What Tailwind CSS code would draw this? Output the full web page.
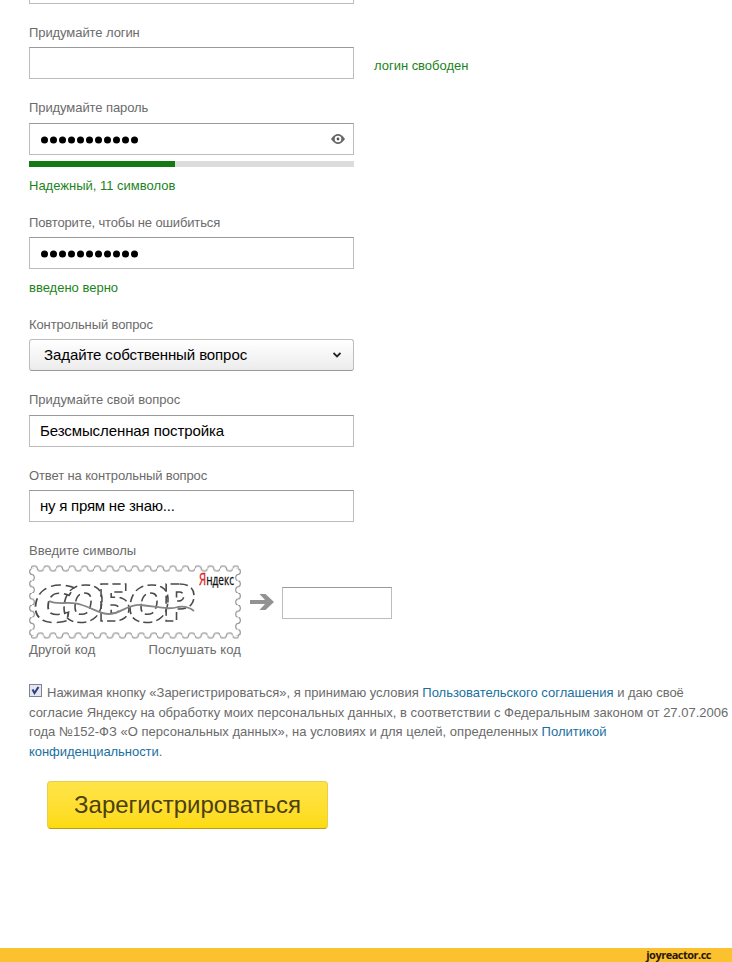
<!DOCTYPE html>
<html lang="ru">
<head>
<meta charset="utf-8">
<title>Регистрация</title>
<script src="https://cdn.jsdelivr.net/npm/@tailwindcss/browser@4"></script>
</head>
<body class="bg-white">
<div class="flex h-[962px] w-[732px] flex-col overflow-hidden bg-white font-['Liberation_Sans',Arial,sans-serif] text-[13px] leading-5 tracking-[-0.08px] text-[#6b6b6b]">
  <main class="flex flex-1 flex-col items-start pl-[29px]">
    <div class="h-1 w-[325px] border-x border-b border-[#bcbcbc]"></div>

    <label class="mt-[19px] whitespace-nowrap">Придумайте логин</label>
    <div class="mt-1 flex items-center">
      <div class="h-8 w-[325px] border border-[#bcbcbc] border-t-[#999]"></div>
      <span class="mt-[5px] ml-5 whitespace-nowrap tracking-[-0.02px] text-[#1c831c]">логин свободен</span>
    </div>

    <label class="mt-[19px] whitespace-nowrap">Придумайте пароль</label>
    <div class="mt-[5px] flex h-8 w-[325px] items-center justify-between border border-[#bcbcbc] border-t-[#999] pr-2 pl-[10px]">
      <svg class="mt-px h-2 w-[100px] fill-black" viewBox="0 0 100 8"><circle cx="4.500" cy="4" r="3.500"/><circle cx="13.500" cy="4" r="3.500"/><circle cx="22.500" cy="4" r="3.500"/><circle cx="31.500" cy="4" r="3.500"/><circle cx="40.500" cy="4" r="3.500"/><circle cx="49.500" cy="4" r="3.500"/><circle cx="58.500" cy="4" r="3.500"/><circle cx="67.500" cy="4" r="3.500"/><circle cx="76.500" cy="4" r="3.500"/><circle cx="85.500" cy="4" r="3.500"/><circle cx="94.500" cy="4" r="3.500"/></svg>
      <svg class="h-[10px] w-[14px]" viewBox="0 0 14 10"><path d="M0 5Q7-5 14 5Q7 15 0 5Z" fill="#666"/><circle cx="7" cy="5" r="3.300" fill="#fff"/><circle cx="7" cy="5" r="1.400" fill="#555"/></svg>
    </div>
    <div class="mt-1.5 h-1.5 w-[325px] bg-[#dcdcdc]"><div class="h-full w-[146px] bg-[#137a13]"></div></div>
    <div class="mt-[9px] whitespace-nowrap tracking-normal text-[#1c831c]">Надежный, 11 символов</div>

    <label class="mt-[17px] whitespace-nowrap tracking-[-0.14px]">Повторите, чтобы не ошибиться</label>
    <div class="mt-1 flex h-8 w-[325px] items-center border border-[#bcbcbc] border-t-[#999] pl-[10px]">
      <svg class="mt-px h-2 w-[100px] fill-black" viewBox="0 0 100 8"><circle cx="4.500" cy="4" r="3.500"/><circle cx="13.500" cy="4" r="3.500"/><circle cx="22.500" cy="4" r="3.500"/><circle cx="31.500" cy="4" r="3.500"/><circle cx="40.500" cy="4" r="3.500"/><circle cx="49.500" cy="4" r="3.500"/><circle cx="58.500" cy="4" r="3.500"/><circle cx="67.500" cy="4" r="3.500"/><circle cx="76.500" cy="4" r="3.500"/><circle cx="85.500" cy="4" r="3.500"/><circle cx="94.500" cy="4" r="3.500"/></svg>
    </div>
    <div class="mt-[9px] whitespace-nowrap tracking-normal text-[#1c831c]">введено верно</div>

    <label class="mt-[17px] whitespace-nowrap tracking-[-0.11px]">Контрольный вопрос</label>
    <div class="mt-1 flex h-8 w-[325px] items-center justify-between rounded-[3px] border border-[#bdbdbd] border-b-[#999] bg-linear-to-b from-white to-[#ececec] pr-3 pl-[14px] text-[15px] tracking-[-0.09px] text-black">
      <span class="whitespace-nowrap">Задайте собственный вопрос</span>
      <svg class="h-[6px] w-[8px]" viewBox="0 0 8 6" fill="none" stroke="#222" stroke-width="1.8"><path d="M.5 1L4 4.400L7.500 1"/></svg>
    </div>

    <label class="mt-[19px] whitespace-nowrap tracking-normal">Придумайте свой вопрос</label>
    <div class="mt-[5px] flex h-8 w-[325px] items-center border border-[#bcbcbc] border-t-[#999] pl-[10px] text-[15px] tracking-[-0.09px] whitespace-nowrap text-black">Безсмысленная постройка</div>

    <label class="mt-[19px] whitespace-nowrap tracking-[-0.12px]">Ответ на контрольный вопрос</label>
    <div class="mt-1 flex h-8 w-[325px] items-center border border-[#bcbcbc] border-t-[#999] pl-[10px] text-[15px] tracking-[-0.23px] whitespace-nowrap text-black">ну я прям не знаю...</div>

    <label class="mt-[19px] whitespace-nowrap tracking-normal">Введите символы</label>
    <div class="mt-[3px] flex h-[76px] items-center">
      <svg class="h-[76px] w-[212px]" viewBox="0 0 212 76" fill="none">
        <defs>
          <pattern id="edge-h" width="12.606" height="8" patternUnits="userSpaceOnUse"><path d="M0 4a3.152 2.500 0 0 1 6.303 0a3.152 2.500 0 0 0 6.303 0" stroke="#858585"/></pattern>
          <pattern id="edge-v" width="8" height="12.200" patternUnits="userSpaceOnUse"><path d="M4 0a2.300 3.050 0 0 0 0 6.100a2.300 3.050 0 0 1 0 6.100" stroke="#858585"/></pattern>
        </defs>
        <g transform="translate(2 .5)"><rect width="208" height="8" fill="url(#edge-h)"/></g>
        <g transform="translate(2 75.500) scale(1 -1)"><rect width="208" height="8" fill="url(#edge-h)"/></g>
        <g transform="translate(-1 4.500)"><rect width="8" height="67.100" fill="url(#edge-v)"/></g>
        <g transform="translate(213 4.500) scale(-1 1)"><rect width="8" height="67.100" fill="url(#edge-v)"/></g>
        <g class="font-['Open_Sans',sans-serif] text-[51px] font-extrabold tracking-normal" stroke="#4a4a4a" stroke-width="1.500" stroke-dasharray="8 4">
          <text transform="translate(1 58) skewX(-8)" textLength="41" lengthAdjust="spacingAndGlyphs">С</text>
          <text transform="translate(30 58) skewX(-8)" textLength="43" lengthAdjust="spacingAndGlyphs">О</text>
          <text x="68" y="57" textLength="34" lengthAdjust="spacingAndGlyphs">Б</text>
          <text transform="translate(96 58) skewX(-8)" textLength="43" lengthAdjust="spacingAndGlyphs">О</text>
          <text x="133" y="57" textLength="34" lengthAdjust="spacingAndGlyphs">Р</text>
        </g>
        <path d="M20 37C30 42 40 36 53 41C66 45 70 50 80 50C92 50 98 40 112 41C130 43 139 46 149 43C155 42 160 43 165 47" stroke="#858585" stroke-width="1.8"/>
        <text class="font-['Open_Sans',sans-serif] text-[14px] tracking-normal" x="170" y="21" textLength="35" lengthAdjust="spacingAndGlyphs" fill="#111" stroke="#111" stroke-width=".3"><tspan class="text-[16px]" fill="#d22" stroke="#d22">Я</tspan>ндекс</text>
      </svg>
      <svg class="ml-[9px] h-[16px] w-[24px]" viewBox="0 0 24 16" fill="#929292"><path d="M0 6H15L9.500 0H15.500L24 8L15.500 16H9.500L15 10H0Z"/></svg>
      <div class="mt-0.5 ml-2 h-8 w-[110px] border border-[#bcbcbc] border-t-[#999]"></div>
    </div>
    <div class="flex w-[212px] justify-between whitespace-nowrap tracking-[0.1px]"><span>Другой код</span><span>Послушать код</span></div>

    <div class="mt-[23px] whitespace-nowrap leading-[19.670px] tracking-[-0.01px]">
      <div class="flex items-center">
        <svg class="mr-[5px] mb-1 size-[13px]" viewBox="0 0 13 13"><rect x=".5" y=".5" width="12" height="12" fill="#e5e7ec" stroke="#7b8496"/><path d="M3.500 5.500L5.500 9L9.500 3" fill="none" stroke="#2c3c86" stroke-width="2"/></svg>
        <span>Нажимая кнопку «Зарегистрироваться», я принимаю условия <a class="text-[#1a6fa0]">Пользовательского соглашения</a> и даю своё</span>
      </div>
      <div>согласие Яндексу на обработку моих персональных данных, в соответствии с Федеральным законом от 27.07.2006</div>
      <div class="tracking-[0.02px]">года №152-ФЗ «О персональных данных», на условиях и для целей, определенных <a class="text-[#1a6fa0]">Политикой</a></div>
      <div class="tracking-[-0.05px]"><a class="text-[#1a6fa0]">конфиденциальности</a>.</div>
    </div>

    <button class="mt-[19px] ml-[18px] flex h-12 w-[281px] items-center justify-center rounded-[4px] border border-[#e8cf45] border-b-[#b99d18] bg-linear-to-b from-[#ffe448] to-[#fddb0c] text-[24px] tracking-normal text-[#4d4010]">Зарегистрироваться</button>
  </main>
  <footer class="flex h-[14px] items-center justify-end bg-[#fbc12f] pr-[21px] font-['Open_Sans',sans-serif] text-[11px] font-bold tracking-[-0.5px] text-[#2a1608]">joyreactor.cc</footer>
</div>
</body>
</html>
